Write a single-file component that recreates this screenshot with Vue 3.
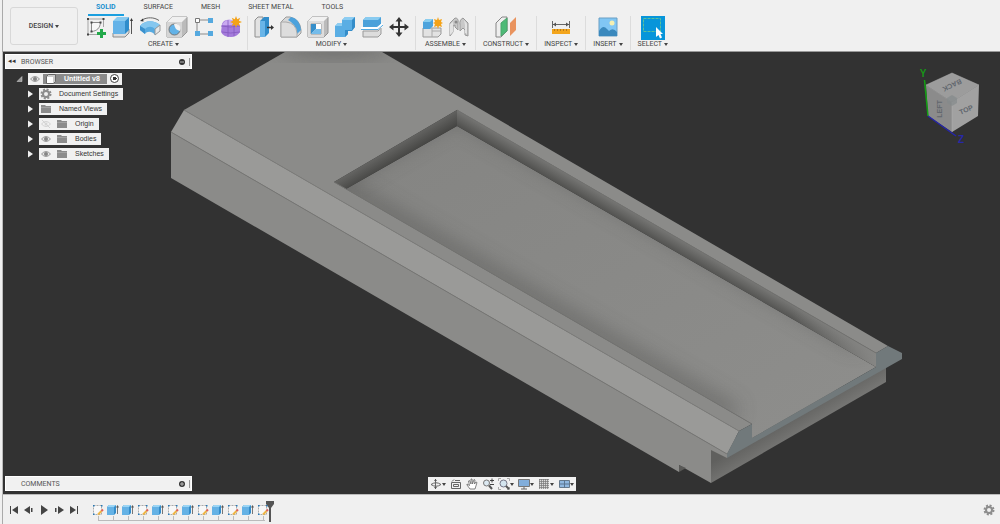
<script setup>
import { ref } from 'vue'

const tabs = ['SOLID', 'SURFACE', 'MESH', 'SHEET METAL', 'TOOLS']
const activeTab = ref('SOLID')

const groups = [
  { label: 'CREATE', icons: ['sketch', 'extrude', 'revolve', 'hole', 'pattern', 'form'] },
  { label: 'MODIFY', icons: ['presspull', 'fillet', 'shell', 'combine', 'split', 'move'] },
  { label: 'ASSEMBLE', icons: ['component', 'joint'] },
  { label: 'CONSTRUCT', icons: ['plane'] },
  { label: 'INSPECT', icons: ['measure'] },
  { label: 'INSERT', icons: ['image'] },
  { label: 'SELECT', icons: ['select'] },
]

const nodes = [
  { label: 'Document Settings', icons: ['gear'] },
  { label: 'Named Views', icons: ['folder'] },
  { label: 'Origin', icons: ['eyeoff', 'folder'] },
  { label: 'Bodies', icons: ['eye', 'folder'] },
  { label: 'Sketches', icons: ['eye', 'folder'] },
]

const navTools = [
  { icon: 'orbit', menu: true },
  { icon: 'lookat', menu: false },
  { icon: 'pan', menu: false },
  { icon: 'zoom', menu: false },
  { icon: 'fit', menu: true },
  { icon: 'display', menu: true },
  { icon: 'grid', menu: true },
  { icon: 'viewports', menu: true },
]

const playback = ['first', 'previous', 'play', 'next', 'last']
const features = ['tsketch', 'textrude', 'textrude', 'tsketch', 'textrude', 'tsketch', 'textrude', 'tsketch', 'textrude', 'tsketch', 'textrude', 'tsketch']
</script>

<template>
  <div class="app">
    <svg class="defs" aria-hidden="true">
      <symbol id="sketch" viewBox="0 0 22 22">
        <path d="M3 3H18M3 3V18M18.500 3V11M3 18.500H12" fill="none" stroke="#a5a5a5" />
        <path d="M6.500 6.500V15.500C12 15 15 12 15.500 6.500Z" fill="#f8f8f8" stroke="#8a8a8a" />
        <path d="M2 2h2v2H2zM17.500 2h2v2h-2zM2 17.500h2v2H2zM5.500 5.500h2v2h-2zM14.500 5.500h2v2h-2zM5.500 14.500h2v2h-2z" fill="#444" />
        <path d="M15 13h3v3h3v3h-3v3h-3v-3h-3v-3h3z" fill="#22a84a" />
      </symbol>
      <symbol id="extrude" viewBox="0 0 22 22">
        <path d="M1 17 5 13H17V17L13 21H1Z" fill="#ddd" stroke="#8b8b8b" />
        <path d="M1 5H13V18H1Z" fill="#64b3e8" />
        <path d="M1 5 5 1H17L13 5Z" fill="#88caf0" />
        <path d="M13 5 17 1V14L13 18Z" fill="#2f8dcb" />
        <path d="M19.500 18V3" stroke="#555" /><path d="M18 5 19.500 2 21 5Z" fill="#333" />
      </symbol>
      <symbol id="revolve" viewBox="0 0 22 22">
        <path d="M3 4C8 1 15 1 20 4.500" fill="none" stroke="#666" /><path d="M1 5 4 2.500 4.500 5.500Z" fill="#333" />
        <path d="M1 10C6 4 15 4 21 9V14L16 19C13 15 8 15 6 18L1 14Z" fill="#57aae0" />
        <path d="M1 10C6 4 15 4 21 9L16 13C13 10 9 10 6 13Z" fill="#86c7ef" />
        <path d="M16 13 21 9V15L16 19Z" fill="#e8e8e8" stroke="#999" /><path d="M1 10 6 13V18L1 14Z" fill="#3b91cd" />
      </symbol>
      <symbol id="hole" viewBox="0 0 22 22">
        <path d="M1 6 6 1H21V16L16 21H1Z" fill="#bbb" stroke="#9a9a9a" />
        <path d="M1 6 6 1H21L16 6Z" fill="#f0f0f0" /><path d="M1 6H16V21H1Z" fill="#d5d5d5" />
        <circle cx="8.500" cy="13.500" r="5.500" fill="#62b2e7" stroke="#777" />
        <path d="M8 8C9 12 10 14 14 15A5 5 0 0 0 8 8Z" fill="#f3f3f3" />
      </symbol>
      <symbol id="pattern" viewBox="0 0 22 22">
        <path d="M4 4H18M4 4V18H18" fill="none" stroke="#8a8a8a" />
        <path d="M2.500 2.500h4v4h-4z" fill="#fff" stroke="#777" />
        <path d="M15 2h5v5h-5zM2 15h5v5H2zM15 15h5v5h-5z" fill="#55a9df" />
      </symbol>
      <symbol id="form" viewBox="0 0 22 22">
        <path d="M2 8Q4 3 11 4Q18 4 20 10V16Q17 21 11 21Q3 21 1 16Z" fill="#a47bdb" />
        <path d="M4 6Q8 2 15 5L12 9H2Z" fill="#c9aaf0" />
        <path d="M1 10Q10 12 20 10M2 16Q10 18 20 16M8 4V21M14 8V20" fill="none" stroke="#8459bf" stroke-width=".8" />
        <path d="m16 0 1.200 3.200 3-1.500-1.300 3.100L22 6l-3.100 1.200 1.300 3-3-1.400L16 12l-1.200-3.200-3 1.400 1.300-3L10 6l3.100-1.200-1.300-3.100 3 1.500Z" fill="#f4a217" />
      </symbol>
      <symbol id="presspull" viewBox="0 0 22 22">
        <path d="M2 4 5 1H10V18L7 21H2Z" fill="#e2e2e2" stroke="#8f8f8f" />
        <path d="M7 5 11 1H16V17L12 21H7Z" fill="#328dca" /><path d="M7 5H12V21H7Z" fill="#69b5e8" />
        <path d="M14 11.500H19" stroke="#333" stroke-width="1.500" /><path d="m18 9 3 2.500L18 14Z" fill="#333" />
      </symbol>
      <symbol id="fillet" viewBox="0 0 22 22">
        <path d="M1 6 6 1H10Q20 3 21 14V17L17 21H1Z" fill="#d7d7d7" stroke="#9b9b9b" />
        <path d="M8 4 11 1Q20 3 21 14L17 18Q16 8 8 4Z" fill="#4ca2dc" />
        <path d="M1 6H6Q16 7 17 17V21H1Z" fill="#ddd" stroke="#aaa" />
      </symbol>
      <symbol id="shell" viewBox="0 0 22 22">
        <path d="M1 5 5 1H21V17L17 21H1Z" fill="#bbb" stroke="#929292" /><path d="M1 5 5 1H21L17 5Z" fill="#f1f1f1" />
        <path d="M1 5H17V21H1Z" fill="#ddd" /><path d="M4 8H14V18H4Z" fill="#f6f6f6" stroke="#999" />
        <path d="M4 8H9V13L4 18Z" fill="#378fca" /><path d="m4 18 5-5h5v5Z" fill="#75bcea" /><path d="M9 8H14V13H9Z" fill="#fff" />
      </symbol>
      <symbol id="combine" viewBox="0 0 22 22">
        <path d="M1 10 4 7H8V4L11 1H21V11L17 15H14V18L11 21H1Z" fill="#5aaee4" />
        <path d="M8 4 11 1H21L18 4ZM1 10 4 7H8V10Z" fill="#8dcdf2" /><path d="M18 4 21 1V11L18 15H14V18L11 21V14H18Z" fill="#348dc9" />
      </symbol>
      <symbol id="split" viewBox="0 0 22 22">
        <path d="M2 15H17L20 12V18L17 21H2Z" fill="#ddd" stroke="#999" />
        <path d="M2 4 5 1H20V8L16 11H2Z" fill="#4ba1da" /><path d="M2 4 5 1H20L17 4Z" fill="#89cbf0" />
        <path d="M0 12.500H17L22 8" fill="none" stroke="#fff" stroke-width="3" /><path d="M0 13.500H17L22 9" fill="none" stroke="#54a9df" />
      </symbol>
      <symbol id="move" viewBox="0 0 22 22">
        <path d="M11 4V18M4 11H18" stroke="#343434" stroke-width="2" />
        <path d="m11 1 3.500 4.500h-7zM11 21l3.500-4.500h-7zM1 11l4.500-3.500v7zM21 11l-4.500-3.500v7z" fill="#343434" />
      </symbol>
      <symbol id="component" viewBox="0 0 22 22">
        <path d="M2 12H20V18L17 21H2Z" fill="#e2e2e2" stroke="#999" /><path d="M11 12V21M11 15H20" stroke="#aaa" />
        <path d="M2 6 5 3H12V10L9 13H2Z" fill="#4da3dc" /><path d="m2 6 3-3h7L9 6Z" fill="#8aceef" />
        <path d="m17 1 1 3 3-1-1 3 2 1-2 1 1 3-3-1-1 3-1-3-3 1 1-3-2-1 2-1-1-3 3 1Z" fill="#f4a217" />
      </symbol>
      <symbol id="joint" viewBox="0 0 22 22">
        <path d="M2 7 7 2Q11 2 10 7V14L7 11V9L5 10V16L2 20ZM20 7 15 2Q11 4 12 9V15L15 12L17 14V19L20 20Z" fill="#c8c8c8" stroke="#999" />
        <path d="M2 8 5 6V16L2 19ZM16 4 19 8V18L17 17V9Z" fill="#e3e3e3" />
        <circle cx="8" cy="6" r="1.500" fill="#8a8a8a" />
      </symbol>
      <symbol id="plane" viewBox="0 0 22 22">
        <path d="M1 7 7 1H12V15L6 21H1Z" fill="#eee" stroke="#858585" /><path d="M6 7 12 2V15L6 20Z" fill="#4dba77" stroke="#4aa56d" />
        <path d="M15 7 21 1V14L15 20Z" fill="#e9935e" />
      </symbol>
      <symbol id="measure" viewBox="0 0 22 22">
        <path d="M2.500 5V12M19.500 5V12M3 8.500H19" stroke="#666" /><path d="m3 8.500 3-2v4zM19 8.500l-3-2v4z" fill="#555" />
        <path d="M2 13H20V18H2Z" fill="#f3a51c" /><path d="M4.500 13V15M7.500 13V15M10.500 13V15M13.500 13V15M16.500 13V15" stroke="#b87a1c" />
      </symbol>
      <symbol id="image" viewBox="0 0 22 22">
        <path d="M2 2H20V20H2Z" fill="#81c6f4" stroke="#6a9fc4" /><path d="M2 15Q6 8 10 13L12 15Q16 11 20 16V20H2Z" fill="#3b89bd" />
        <circle cx="15" cy="7" r="2.500" fill="#f5efb1" />
      </symbol>
      <symbol id="select" viewBox="0 0 24 24">
        <path d="M0 0H24V24H0Z" fill="#0795da" /><path d="M2.500 2.500H19.500V15.500H2.500Z" fill="none" stroke="#5dc19a" stroke-dasharray="3 1" />
        <path d="M15 11V21L17.500 19L19 22.500L21 21.500L19.500 18H22Z" fill="#fff" />
      </symbol>
      <symbol id="gear" viewBox="0 0 12 12">
        <circle cx="6" cy="6" r="4.500" fill="none" stroke="#8d8d8d" stroke-width="2" stroke-dasharray="2 1.534" />
        <circle cx="6" cy="6" r="3" fill="none" stroke="#8d8d8d" stroke-width="2" />
      </symbol>
      <symbol id="folder" viewBox="0 0 12 12"><path d="M1 2H5L6 3H11V10H1Z" fill="#8c8c8c" /><path d="M1 4.500H11" stroke="#bbb" stroke-width=".5" /></symbol>
      <symbol id="eye" viewBox="0 0 12 12">
        <path d="M1.500 6Q6 1 10.500 6Q6 11 1.500 6Z" fill="#e5e5e5" stroke="#999" /><circle cx="6" cy="6" r="2" fill="#858585" />
      </symbol>
      <symbol id="eyeoff" viewBox="0 0 12 12">
        <path d="M1.500 6Q6 1 10.500 6Q6 11 1.500 6ZM2 2 10 10" fill="none" stroke="#d2d2d2" /><circle cx="6" cy="6" r="1.500" fill="#d5d5d5" />
      </symbol>
      <symbol id="orbit" viewBox="0 0 12 12">
        <path d="M5.500 1V11M1 6.500Q6 3 11 6.500Q6 10 1 6.500" fill="none" stroke="#666" /><path d="m4 3 1.500-2L7 3zM4 9l1.500 2L7 9z" fill="#555" />
      </symbol>
      <symbol id="lookat" viewBox="0 0 12 12"><path d="M1.500 4.500H10.500V10.500H1.500ZM3.500 6.500H8.500V8.500H3.500Z" fill="none" stroke="#666" /><path d="M2 3.500 4 1.500M5 2.500H10" stroke="#666" /></symbol>
      <symbol id="pan" viewBox="0 0 12 12"><path d="M4 11 1 7V6L3.500 7.500 2.500 3 3.500 2.500 5 6V1H6L6.500 6 8 1.500 9 2 8.500 6 10 4 11 4.500 9 11Z" fill="#fff" stroke="#666" stroke-width=".8" /></symbol>
      <symbol id="zoom" viewBox="0 0 12 12"><circle cx="4.500" cy="5" r="3" fill="#dce9f2" stroke="#777" /><path d="M7 7.500 10 11" stroke="#555" stroke-width="2" /><path d="M8 2.500H12M10 .500V4.500M8 6.500H12" stroke="#444" /></symbol>
      <symbol id="fit" viewBox="0 0 12 12"><path d="M.500 3V.500H3M9 .500H11.500V3M.500 9V11.500H3M9 11.500H11.500V9" fill="none" stroke="#aaa" /><circle cx="5.500" cy="5.500" r="3.500" fill="#d4e5ef" stroke="#778" /><path d="m8 8 3 3" stroke="#555" stroke-width="2" /></symbol>
      <symbol id="display" viewBox="0 0 12 12"><path d="M.500 1.500H11.500V8.500H.500Z" fill="#82aedb" stroke="#777" /><path d="M6 9V11M3 11H9" stroke="#666" /></symbol>
      <symbol id="grid" viewBox="0 0 12 12"><path d="M1 1H11V11H1Z" fill="#ddd" /><path d="M1.500 1V11M3.500 1V11M5.500 1V11M7.500 1V11M9.500 1V11M1 1.500H11M1 3.500H11M1 5.500H11M1 7.500H11M1 9.500H11" stroke="#777" stroke-width=".7" /></symbol>
      <symbol id="viewports" viewBox="0 0 12 12"><path d="M1.500 2.500H11.500V9.500H1.500Z" fill="#90b8e0" stroke="#66798b" /><path d="M6.500 2V10M1 6H12" stroke="#5a7590" /></symbol>
      <symbol id="first" viewBox="0 0 12 12"><path d="M2 2H3V10H2ZM10 2V10L4 6Z" fill="#444" /></symbol>
      <symbol id="previous" viewBox="0 0 12 12"><path d="M7 2V10L1 6ZM8 4H9.500V8H8Z" fill="#444" /></symbol>
      <symbol id="play" viewBox="0 0 12 12"><path d="M3 1V11L10 6Z" fill="#444" /></symbol>
      <symbol id="next" viewBox="0 0 12 12"><path d="M5 2V10L11 6ZM2 4H3.500V8H2Z" fill="#444" /></symbol>
      <symbol id="last" viewBox="0 0 12 12"><path d="M2 2V10L8 6ZM9 2H10V10H9Z" fill="#444" /></symbol>
      <symbol id="tsketch" viewBox="0 0 12 12">
        <path d="M1.500 1.500H9.500V10.500H1.500Z" fill="#f8f8f8" stroke="#aaa" stroke-dasharray="2 1" />
        <path d="M1 1h1.500v1.500H1zM9 1h1.500v1.500H9zM1 9.500h1.500V11H1z" fill="#2678b5" />
        <path d="m6 10.500 3.500-3.500" stroke="#efb543" stroke-width="2" /><path d="m9.500 7 1.500-1.500" stroke="#e0605a" stroke-width="2" />
      </symbol>
      <symbol id="textrude" viewBox="0 0 12 12">
        <path d="M0 3 2 1H9V9L7 11H0Z" fill="#348dca" /><path d="M0 3H7V11H0Z" fill="#65b2e5" /><path d="m0 3 2-2h7L7 3Z" fill="#9bd5f5" />
        <path d="M10.500 10V2" stroke="#777" /><path d="M9 3.500 10.500 1 12 3.500Z" fill="#555" />
      </symbol>
    </svg>

    <header class="toolbar">
      <button class="design">DESIGN <i class="caret"></i></button>
      <div class="ribbon">
        <nav class="tabs">
          <button v-for="tab in tabs" :key="tab" class="tab" :class="{ active: tab === activeTab }" @click="activeTab = tab">{{ tab }}</button>
        </nav>
        <div class="groups">
          <section v-for="group in groups" :key="group.label" class="group" :class="{ single: group.icons.length === 1 }">
            <div class="tools">
              <button v-for="icon in group.icons" :key="icon" :aria-label="icon" class="tool" :class="{ chosen: icon === 'select' }">
                <svg><use :href="'#' + icon" /></svg>
              </button>
            </div>
            <button class="group-label">{{ group.label }} <i class="caret"></i></button>
          </section>
        </div>
      </div>
    </header>

    <main class="viewport">
      <svg class="scene" viewBox="3 52 997 442" preserveAspectRatio="xMidYMid slice" role="img" aria-label="Model view">
        <defs>
          <linearGradient id="backWall" gradientUnits="userSpaceOnUse" x1="393" y1="144" x2="402" y2="159"><stop stop-color="#6a6a68" /><stop offset="1" stop-color="#444442" /></linearGradient>
          <linearGradient id="sideWall" gradientUnits="userSpaceOnUse" x1="660" y1="228" x2="653" y2="240"><stop stop-color="#767674" /><stop offset="1" stop-color="#50504e" /></linearGradient>
          <linearGradient id="wallEnd" x1="0" x2="1"><stop offset=".8" stop-color="#868684" stop-opacity="0" /><stop offset="1" stop-color="#868684" /></linearGradient>
          <linearGradient id="under" gradientUnits="userSpaceOnUse" x1="790" y1="415" x2="804" y2="438"><stop stop-color="#60605e" /><stop offset="1" stop-color="#7c7c7a" /></linearGradient>
          <linearGradient id="floorTone" x1="0" x2="1" y2="1"><stop stop-color="#848482" /><stop offset="1" stop-color="#8e8e8c" /></linearGradient>
          <filter id="soft" x="-20%" y="-20%" width="140%" height="140%"><feGaussianBlur stdDeviation="10" /></filter>
          <clipPath id="floorClip"><path d="M346 189 457 126 876 367 752 438V424Z" /></clipPath>
          <clipPath id="topClip"><path d="M184 110 285 52H382L888 346 876 353 457 110 334 182 752 424 739 431Z" /></clipPath>
        </defs>
        <path d="M3 52H1000V494H3Z" fill="#323232" />
        <path d="M711 449 886 366V382L711 483Z" fill="url(#under)" />
        <path d="M171 132V178L679 472V465L711 483V450L727 458V454Z" fill="#8b8b89" />
        <path d="M679 465V472L686 468Z" fill="#595957" />
        <path d="M184 110 171 132 727 454 739 431Z" fill="#9a9a98" />
        <path d="M171 132 727 454" stroke="#777775" fill="none" />
        <path d="M184 110 285 52H382L888 346 876 353 457 110 334 182 752 424 739 431Z" fill="#8b8b89" />
        <g clip-path="url(#topClip)"><ellipse cx="334" cy="46" rx="55" ry="12" fill="#656563" opacity=".7" filter="url(#soft)" /></g>
        <path d="M184 110 739 431" stroke="#7d7d7b" />
        <path d="M346 189 457 126 876 367 752 438V424Z" fill="url(#floorTone)" />
        <g clip-path="url(#floorClip)">
          <path d="M334 182 457 112 860 343" fill="none" stroke="#555553" stroke-width="16" opacity=".5" filter="url(#soft)" />
          <path d="M334 182 735 414" stroke="#50504e" stroke-width="16" opacity=".5" filter="url(#soft)" />
        </g>
        <path d="M334 182 457 110V126L346 189Z" fill="url(#backWall)" />
        <path d="M457 110 876 353V367L457 126Z" fill="url(#sideWall)" />
        <path d="M457 110 876 353V367L457 126Z" fill="url(#wallEnd)" />
        <path d="M334 182 752 424M457 110 876 353" stroke="#737371" />
        <path d="M727 454 739 431 752 424V438L876 367V353L888 346 902 353V359L727 458Z" fill="#71797b" />
        <g class="cube">
          <path d="M952 73 979 85 952 102 926 85Z" fill="#9c9c9c" />
          <path d="M926 85 952 102V132L928 116Z" fill="#8b8b8b" />
          <path d="M979 85 952 102V132L978 116Z" fill="#a1a1a1" />
          <path d="M926 85 952 73 979 85 952 102ZM952 102V132" fill="none" stroke="#b0b0b0" stroke-width=".5" />
          <path d="M947 98 952 95 957 98V103L952 106 947 103Z" fill="#858a8c" opacity=".7" />
          <path d="M924.500 80 928 116" stroke="#12a012" stroke-width="1.500" />
          <path d="M928 116 956 136" stroke="#2525a8" stroke-width="1.500" />
          <text x="923" y="77" fill="#179517" class="axis">Y</text>
          <text x="961" y="143" fill="#2828a8" class="axis">Z</text>
          <text transform="translate(951 83) rotate(155)" class="face">BACK</text>
          <text transform="translate(942 109) rotate(-90)" class="face">LEFT</text>
          <text transform="translate(967 112) rotate(-22)" class="face">TOP</text>
        </g>
      </svg>

      <section class="browser">
        <div class="panel">
          <span class="collapse">◂◂</span><h2>BROWSER</h2>
          <button class="round" aria-label="Collapse browser"><svg viewBox="0 0 6 6"><circle cx="3" cy="3" r="3" fill="#333" /><path d="M1 3H5" stroke="#bbb" /></svg></button><span class="grip"></span>
        </div>
        <div class="row root">
          <svg class="twist" viewBox="0 0 7 7"><path d="M6 1V6H1Z" fill="#999" stroke="#ddd" stroke-width=".5" /></svg>
          <div class="node">
            <svg class="icon"><use href="#eye" /></svg>
            <span class="title">
              <svg class="icon" viewBox="0 0 12 12"><path d="M1.500 3.500 3.500 1.500H10.500V8.500L8.500 10.500H1.500Z" fill="#ccc" stroke="#666" /><path d="M2 4H8V10H2Z" fill="#fff" /></svg>
              <b>Untitled v8</b>
            </span>
            <input type="radio" checked aria-label="Activate component" />
          </div>
        </div>
        <ul>
          <li v-for="node in nodes" :key="node.label" class="row">
            <svg class="twist" viewBox="0 0 7 7"><path d="M1 0 6 3.500 1 7Z" fill="#f0f0f0" /></svg>
            <div class="node">
              <svg v-for="icon in node.icons" :key="icon" class="icon"><use :href="'#' + icon" /></svg>
              <span class="name">{{ node.label }}</span>
            </div>
          </li>
        </ul>
      </section>

      <section class="panel comments">
        <h2>COMMENTS</h2>
        <button class="round" aria-label="Add comment"><svg viewBox="0 0 6 6"><circle cx="3" cy="3" r="3" fill="#333" /><path d="M1 3H5M3 1V5" stroke="#bbb" /></svg></button><span class="grip"></span>
      </section>

      <nav class="navbar">
        <button v-for="tool in navTools" :key="tool.icon" :aria-label="tool.icon">
          <svg class="icon"><use :href="'#' + tool.icon" /></svg><i v-if="tool.menu" class="caret"></i>
        </button>
      </nav>
    </main>

    <footer class="timeline">
      <div class="playback">
        <button v-for="step in playback" :key="step" :aria-label="step"><svg class="icon"><use :href="'#' + step" /></svg></button>
      </div>
      <ol class="features">
        <li v-for="(feature, index) in features" :key="index"><svg class="icon"><use :href="'#' + feature" /></svg></li>
      </ol>
      <svg class="marker" viewBox="0 0 8 21"><path d="M0 0H8V3L5 7V21H3V7L0 3Z" fill="#555" /></svg>
      <button class="settings" aria-label="Settings"><svg class="icon"><use href="#gear" /></svg></button>
    </footer>
  </div>
</template>

<style>
body { margin: 0; background: #f0f0f0; }
</style>

<style scoped>
* { box-sizing: border-box; }
.app { display: flex; flex-direction: column; height: 100vh; background: #f0f0f0; color: #444; font: 7px/9px Roboto, "Liberation Sans", sans-serif; }
.defs { position: absolute; width: 0; height: 0; }
svg { display: block; }
button { display: flex; align-items: center; justify-content: center; margin: 0; padding: 0; border: 0; background: none; color: inherit; font: inherit; }
h2 { margin: 0; font: inherit; }
ul, ol { margin: 0; padding: 0; list-style: none; }
.caret { width: 0; height: 0; margin-left: 2px; border: 2px solid transparent; border-top: 3px solid #444; border-bottom: 0; }
.icon { width: 12px; height: 12px; flex: none; }

.toolbar { display: flex; height: 52px; flex: none; margin-left: 2px; padding-left: 7px; border-left: 1px solid #aaa; border-bottom: 1px solid #999; }
.design { width: 68px; height: 38px; margin-top: 7px; border: 1px solid #d8d8d8; border-radius: 3px; font-weight: 500; }
.ribbon { flex: 1; margin-left: 5px; }
.tabs { display: flex; gap: 12px; height: 16px; padding-left: 5px; }
.tab { padding: 1px 8px 0; border-bottom: 2px solid transparent; white-space: nowrap; }
.tab.active { border-color: #1b9fdf; color: #178fce; font-weight: 700; }
.groups { display: flex; height: 34px; }
.group { display: flex; flex-direction: column; align-items: center; padding: 0 5px; border-right: 1px solid #dcdcdc; }
.group.single { padding: 0 7px; }
.group:first-child { padding-left: 2px; }
.group:last-child { border: 0; }
.tools { display: flex; gap: 5px; height: 23px; align-items: center; }
.tool svg { width: 22px; height: 22px; }
.tool.chosen svg { width: 24px; height: 24px; }
.group-label { height: 12px; white-space: nowrap; }

.viewport { position: relative; flex: 1; min-height: 0; margin-left: 2px; border-left: 1px solid #bbb; overflow: hidden; background: #323232; }
.scene { position: absolute; inset: 0; width: 100%; height: 100%; }
.axis { font: bold 10px "Liberation Sans", sans-serif; text-anchor: middle; }
.face { font: bold 7px "Liberation Sans", sans-serif; fill: #62676e; text-anchor: middle; }
.browser { position: absolute; left: 2px; top: 2px; }
.panel { display: flex; align-items: center; width: 187px; height: 15px; background: #f1f1f1; border: 1px solid #fff; color: #555; }
.panel h2 { flex: 1; padding-top: 1px; }
.collapse { width: 15px; padding-left: 2px; color: #333; }
.round { margin-right: 4px; }
.round svg { width: 6px; height: 6px; }
.grip { width: 2px; height: 8px; border-left: 1px solid #999; }
.comments { position: absolute; left: 2px; bottom: 3px; padding-left: 15px; }

.row { display: flex; align-items: center; height: 15px; padding-left: 22px; color: #333; font: 7px/9px "Liberation Sans", Arial, sans-serif; }
.row.root { margin-top: 2px; padding-left: 11px; }
.twist { width: 7px; height: 8px; margin-right: 5px; }
.node { display: flex; align-items: center; gap: 4px; height: 12px; padding: 0 5px 0 1px; background: #f1f1f1; white-space: nowrap; }
.name { padding-left: 3px; }
.root .node { gap: 2px; padding-right: 3px; }
.title { display: flex; align-items: center; width: 64px; height: 10px; gap: 7px; padding-left: 2px; background: #8b8b8b; color: #fff; }
.root input { appearance: none; width: 9px; height: 9px; margin: 0 0 0 1px; border: 1px solid #444; border-radius: 50%; background: radial-gradient(#333 0 2px, #fff 2px); }

.navbar { position: absolute; left: 50%; bottom: 3px; display: flex; align-items: center; gap: 4px; height: 14px; margin-left: -74px; padding: 0 2px; background: #f1f1f1; }
.navbar .caret { margin-left: 0; }

.timeline { display: flex; flex: none; height: 30px; margin-left: 2px; padding: 6px 5px 0; border-left: 1px solid #aaa; border-top: 1px solid #bbb; }
.playback { display: flex; gap: 3px; height: 18px; }
.playback button { width: 12px; height: 18px; }
.features { display: flex; height: 20px; margin-left: 11px; }
.features li { position: relative; width: 15px; height: 20px; padding: 3px 1px 0; }
.features li::after { content: ""; position: absolute; left: 7px; bottom: 0; width: 15px; height: 4px; border-left: 1px solid #bbb; border-bottom: 1px solid #bbb; }
.features li:last-child::after { width: 1px; }
.marker { width: 8px; height: 21px; margin-left: -5px; }
.settings { width: 12px; height: 18px; margin-left: auto; }
</style>
